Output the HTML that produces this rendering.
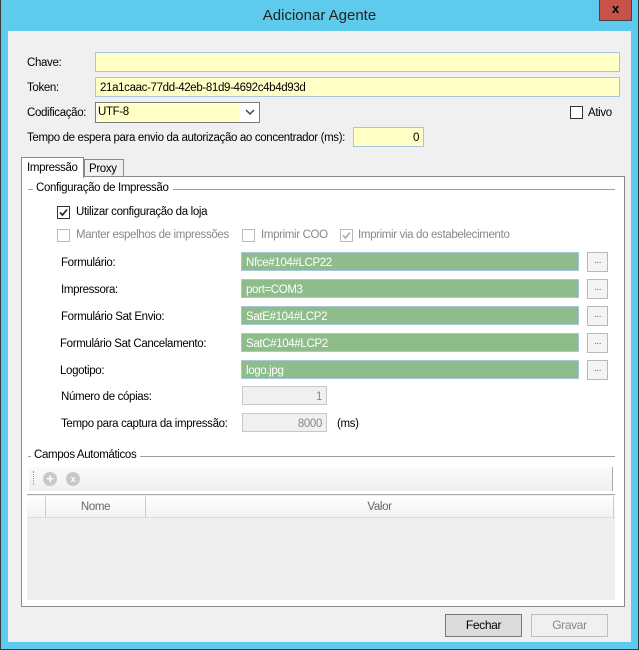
<!DOCTYPE html>
<html><head><meta charset="utf-8"><style>
*{box-sizing:border-box;margin:0;padding:0}
body{width:639px;height:650px;background:#5ecbec;position:relative;overflow:hidden;font-family:"Liberation Sans",sans-serif;font-size:11.5px;color:#000;letter-spacing:-0.35px}
.a{position:absolute}
.frame{left:0;top:0;width:639px;height:650px;border:1px solid #3a3a3a;border-top:none}
.title{left:0;top:7px;width:639px;text-align:center;font-size:15px;color:#222;letter-spacing:0}
.close{left:599px;top:0;width:33px;height:21px;background:#c7524a;border:1px solid #444;border-top:none;color:#000;font-weight:bold;font-size:13px;text-align:center;line-height:18px}
.client{left:8px;top:31px;width:623px;height:611px;background:#f0f0f0}
.inp{background:#ffffc6;border:1px solid #a8c4de;padding:3px 4px 1px;line-height:14px}
.green{background:#8fbc8b;border:1px solid #a8c4de;color:#fff;padding:3px 4px 1px;line-height:14px}
.dis{background:#f0f0f0;border:1px solid #c8c8c8;color:#888;text-align:right;padding:3px 4px 1px;line-height:14px}
.btn3{width:21px;height:20px;border:1px solid #b8b8b8;background:#f4f4f4;color:#666;text-align:center;font-size:10px;line-height:16px}
.cb{width:13px;height:13px;border:1px solid #333;background:#fff}
.cbd{border-color:#bbb}
.gray{color:#888}
.btn{height:23px;border:1px solid #777;background:#e1e1e1;text-align:center;line-height:21px;font-size:12px}
</style></head><body>
<div class="a frame"></div>
<div class="a title">Adicionar Agente</div>
<div class="a close">x</div>
<div class="a client"></div>

<div class="a" style="left:27px;top:57px">Chave:</div>
<div class="a inp" style="left:95px;top:52px;width:525px;height:20px"></div>
<div class="a" style="left:27px;top:82px">Token:</div>
<div class="a inp" style="left:95px;top:77px;width:525px;height:20px">21a1caac-77dd-42eb-81d9-4692c4b4d93d</div>
<div class="a" style="left:27px;top:107px">Codificação:</div>
<div class="a" style="left:95px;top:102px;width:165px;height:21px;border:1px solid #7a7a7a;background:#fff"></div>
<div class="a" style="left:97px;top:104px;width:143px;height:17px;background:#ffffc6;padding:2px 1px 0">UTF-8</div>
<svg class="a" style="left:245px;top:108px" width="10" height="8"><path d="M1 2 L5 6 L9 2" stroke="#444" stroke-width="1.5" fill="none"/></svg>
<div class="a cb" style="left:570px;top:106px"></div>
<div class="a" style="left:588px;top:107px">Ativo</div>
<div class="a" style="left:27px;top:132px">Tempo de espera para envio da autorização ao concentrador (ms):</div>
<div class="a inp" style="left:353px;top:127px;width:71px;height:20px;text-align:right">0</div>

<div class="a" style="left:21px;top:176px;width:604px;height:431px;background:#fff;border:1px solid #898989"></div>
<div class="a" style="left:21px;top:157px;width:63px;height:21px;background:#fff;border:1px solid #898989;border-bottom:none;padding:4px 5px">Impressão</div>
<div class="a" style="left:84px;top:159px;width:40px;height:18px;background:#f0f0f0;border:1px solid #898989;padding:3px 4px">Proxy</div>

<div class="a" style="left:28px;top:189px;width:587px;height:1px;background:#a0a0a0"></div>
<div class="a" style="left:33px;top:182px;background:#fff;padding:0 4px 0 3px">Configuração de Impressão</div>

<div class="a cb" style="left:57px;top:206px"></div>
<svg class="a" style="left:58px;top:207px" width="11" height="11"><path d="M2 5.5 L4.5 8 L9 2.5" stroke="#222" stroke-width="1.6" fill="none"/></svg>
<div class="a" style="left:76px;top:206px">Utilizar configuração da loja</div>
<div class="a cb cbd" style="left:57px;top:229px"></div>
<div class="a gray" style="left:76px;top:229px">Manter espelhos de impressões</div>
<div class="a cb cbd" style="left:242px;top:229px"></div>
<div class="a gray" style="left:261px;top:229px">Imprimir COO</div>
<div class="a cb cbd" style="left:340px;top:229px"></div>
<svg class="a" style="left:341px;top:230px" width="11" height="11"><path d="M2 5.5 L4.5 8 L9 2.5" stroke="#aaa" stroke-width="1.6" fill="none"/></svg>
<div class="a gray" style="left:358px;top:229px">Imprimir via do estabelecimento</div>

<div class="a" style="left:61px;top:257px">Formulário:</div>
<div class="a green" style="left:241px;top:252px;width:338px;height:19px">Nfce#104#LCP22</div>
<div class="a btn3" style="left:587px;top:252px">...</div>
<div class="a" style="left:61px;top:284px">Impressora:</div>
<div class="a green" style="left:241px;top:279px;width:338px;height:19px">port=COM3</div>
<div class="a btn3" style="left:587px;top:279px">...</div>
<div class="a" style="left:61px;top:311px">Formulário Sat Envio:</div>
<div class="a green" style="left:241px;top:306px;width:338px;height:19px">SatE#104#LCP2</div>
<div class="a btn3" style="left:587px;top:306px">...</div>
<div class="a" style="left:60px;top:338px">Formulário Sat Cancelamento:</div>
<div class="a green" style="left:241px;top:333px;width:338px;height:19px">SatC#104#LCP2</div>
<div class="a btn3" style="left:587px;top:333px">...</div>
<div class="a" style="left:60px;top:365px">Logotipo:</div>
<div class="a green" style="left:241px;top:360px;width:338px;height:19px">logo.jpg</div>
<div class="a btn3" style="left:587px;top:360px">...</div>
<div class="a" style="left:61px;top:391px">Número de cópias:</div>
<div class="a dis" style="left:242px;top:386px;width:85px;height:19px">1</div>
<div class="a" style="left:61px;top:418px">Tempo para captura da impressão:</div>
<div class="a dis" style="left:242px;top:413px;width:85px;height:19px">8000</div>
<div class="a" style="left:337px;top:418px">(ms)</div>

<div class="a" style="left:28px;top:456px;width:587px;height:1px;background:#a0a0a0"></div>
<div class="a" style="left:31px;top:449px;background:#fff;padding:0 4px 0 3px">Campos Automáticos</div>
<div class="a" style="left:29px;top:467px;width:584px;height:24px;background:linear-gradient(#fbfbfb,#f0f0f0);border-right:1px solid #aaa"></div>
<div class="a" style="left:33px;top:471px;width:1px;height:14px;border-left:1px dotted #999"></div>
<div class="a" style="left:43px;top:472px;width:14px;height:14px;border-radius:50%;background:#c8c8c8;color:#fff;font-size:13px;line-height:13px;text-align:center;font-weight:bold">+</div>
<div class="a" style="left:66px;top:472px;width:14px;height:14px;border-radius:50%;background:#c8c8c8;color:#fff;font-size:9px;line-height:14px;text-align:center;font-weight:bold">x</div>
<div class="a" style="left:27px;top:494px;width:588px;height:106px;background:#efefef;border-top:1px solid #aaa"></div>
<div class="a" style="left:27px;top:496px;width:588px;height:22px;background:linear-gradient(#fff,#f2f2f2);border-bottom:1px solid #ddd"></div>
<div class="a" style="left:45px;top:496px;width:1px;height:22px;background:#ccc"></div>
<div class="a" style="left:145px;top:496px;width:1px;height:22px;background:#ccc"></div>
<div class="a" style="left:613px;top:496px;width:1px;height:22px;background:#ccc"></div>
<div class="a gray" style="left:46px;top:501px;width:99px;text-align:center;color:#666">Nome</div>
<div class="a gray" style="left:146px;top:501px;width:467px;text-align:center;color:#666">Valor</div>

<div class="a btn" style="left:445px;top:614px;width:77px;background:#dcdcdc">Fechar</div>
<div class="a btn" style="left:531px;top:614px;width:77px;border-color:#bfbfbf;background:#f0f0f0;color:#888">Gravar</div>
</body></html>
